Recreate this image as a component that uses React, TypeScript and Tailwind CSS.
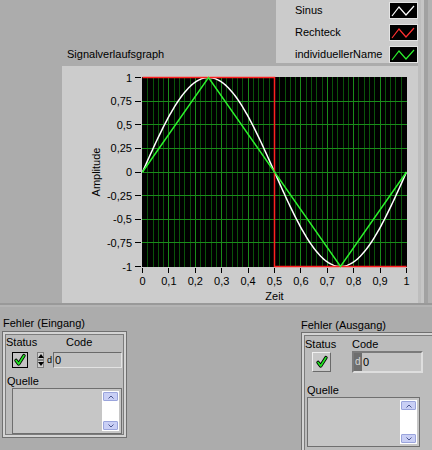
import React from "react";

const font = "font-['Liberation_Sans',Arial,sans-serif]";

// plot area inside the graph panel (panel coords)
const X = (t: number) => 80.5 + 264 * t;
const Y = (v: number) => 11.5 + 94.5 * (1 - v);

const yLabels: [number, string][] = [
  [1, "1"],
  [0.75, "0,75"],
  [0.5, "0,5"],
  [0.25, "0,25"],
  [0, "0"],
  [-0.25, "-0,25"],
  [-0.5, "-0,5"],
  [-0.75, "-0,75"],
  [-1, "-1"],
];

function Graph() {
  const minor: number[] = [];
  const major: number[] = [];
  for (let i = 1; i < 50; i++) {
    const x = Math.round(X(i / 50) - 0.5) + 0.5;
    (i % 5 === 0 ? major : minor).push(x);
  }
  const hLines = [0.75, 0.5, 0.25, 0, -0.25, -0.5, -0.75].map((v) => Math.round(Y(v) - 0.5) + 0.5);
  const sine = Array.from({ length: 241 }, (_, i) => {
    const t = i / 240;
    return `${i ? "L" : "M"}${X(t).toFixed(2)} ${Y(Math.sin(2 * Math.PI * t)).toFixed(2)}`;
  }).join(" ");
  const tri = `M${X(0)} ${Y(0)} L${X(0.25)} ${Y(1)} L${X(0.75)} ${Y(-1)} L${X(1)} ${Y(0)}`;
  const rect = `M${X(0)} ${Y(1)} L${X(0.5)} ${Y(1)} L${X(0.5)} ${Y(-1)} L${X(1)} ${Y(-1)}`;

  return (
    <svg width="356" height="237" className="block" fontFamily="Liberation Sans, Arial, sans-serif" fontSize="11">
      <rect x="80" y="11" width="265" height="190" fill="#000" />
      {minor.map((x) => (
        <line key={"m" + x} x1={x} x2={x} y1="11" y2="201" stroke="#0a520a" strokeWidth="1" />
      ))}
      {hLines.map((y) => (
        <line key={"h" + y} x1="80" x2="345" y1={y} y2={y} stroke="#1a8c1a" strokeWidth="1" />
      ))}
      {major.map((x) => (
        <line key={"M" + x} x1={x} x2={x} y1="11" y2="201" stroke="#1a8c1a" strokeWidth="1" />
      ))}
      <path d={sine} fill="none" stroke="#ffffff" strokeWidth="1.5" />
      <path d={rect} fill="none" stroke="#ff2020" strokeWidth="1.5" />
      <path d={tri} fill="none" stroke="#2cf02c" strokeWidth="1.5" />

      {yLabels.map(([v, s]) => (
        <g key={s}>
          <line x1="73" x2="79" y1={Math.round(Y(v) - 0.5) + 0.5} y2={Math.round(Y(v) - 0.5) + 0.5} stroke="#000" />
          <text x="70" y={Y(v) + 4} textAnchor="end" fill="#000">
            {s}
          </text>
        </g>
      ))}
      {Array.from({ length: 11 }, (_, i) => {
        const x = Math.round(X(i / 10) - 0.5) + 0.5;
        return (
          <g key={i}>
            <line x1={x} x2={x} y1="202" y2="207" stroke="#000" />
            <text x={X(i / 10)} y="219" textAnchor="middle" fill="#000">
              {i === 0 ? "0" : i === 10 ? "1" : `0,${i}`}
            </text>
          </g>
        );
      })}
      <text x={X(0.5)} y="234" textAnchor="middle" fill="#000">
        Zeit
      </text>
      <text x="0" y="0" textAnchor="middle" fill="#000" transform="translate(38 106) rotate(-90)">
        Amplitude
      </text>
    </svg>
  );
}

function LegendIcon({ color }: { color: string }) {
  return (
    <div className="w-[29px] h-[17px] border border-[#e4e4e4] bg-black">
      <svg width="27" height="15" className="block">
        <path d="M2 13 L9 4 L16 12 L24 3" fill="none" stroke={color} strokeWidth="1.2" />
      </svg>
    </div>
  );
}

function Legend() {
  const rows: [string, string][] = [
    ["Sinus", "#ffffff"],
    ["Rechteck", "#ff3030"],
    ["individuellerName", "#2cf02c"],
  ];
  return (
    <div className="w-[142px] h-[63px] bg-[#cbcbcb] flex flex-col pt-[2px] gap-[5px]">
      {rows.map(([name, color]) => (
        <div key={name} className="flex items-center justify-between h-[17px] pl-[19px]">
          <span className="text-[11px] leading-[13px] text-black">{name}</span>
          <LegendIcon color={color} />
        </div>
      ))}
    </div>
  );
}

function Check({ size = 16 }: { size?: number }) {
  return (
    <svg width={size} height={size} viewBox="0 0 16 16" className="block">
      <path d="M3.5 8.5 L6.5 12.5 L12.5 3" fill="none" stroke="#000" strokeWidth="4" strokeLinecap="round" strokeLinejoin="round" />
      <path d="M3.5 8.5 L6.5 12.5 L12.5 3" fill="none" stroke="#22e622" strokeWidth="2" strokeLinecap="round" strokeLinejoin="round" />
    </svg>
  );
}

function ScrollBtn({ up }: { up?: boolean }) {
  return (
    <div className="h-[9px] mx-[1px] bg-[#c9cff5] border border-[#9aa4dc] rounded-[1px] flex items-center justify-center">
      <svg width="6" height="4" className="block">
        <path d={up ? "M0.5 3.5 L3 1 L5.5 3.5" : "M0.5 0.5 L3 3 L5.5 0.5"} fill="none" stroke="#4a5590" strokeWidth="1" />
      </svg>
    </div>
  );
}

function TextBox({ w, h }: { w: number; h: number }) {
  return (
    <div
      className="border border-[#6f6f6f] bg-[#c6c6c6] flex justify-end pr-[2px] py-[2px]"
      style={{ width: w, height: h }}
    >
      <div className="w-[17px] h-full bg-white flex flex-col justify-between py-[1px]">
        <ScrollBtn up />
        <ScrollBtn />
      </div>
    </div>
  );
}

function Frame({ children, className }: { children: React.ReactNode; className: string }) {
  return (
    <div className={`border border-[#707070] ${className}`}>
      <div className="h-full border-2 border-[#d4d4d4]">
        <div className="h-full border border-[#7c7c7c] bg-[#bcbcbc]">{children}</div>
      </div>
    </div>
  );
}

function FehlerEingang() {
  return (
    <div className="pl-[2px] pt-[10px]">
      <div className="text-[11px] leading-[13px] pl-[1px]">Fehler (Eingang)</div>
      <Frame className="w-[125px] h-[107px] mt-[1px]">
        <div className="flex flex-col pt-[1px]">
          <div className="flex h-[13px] text-[11px] leading-[13px]">
            <span className="w-[60px]">Status</span>
            <span>Code</span>
          </div>
          <div className="flex items-center mt-[3px] h-[16px]">
            <div className="ml-[6px] w-[16px] h-[16px] border border-black bg-[#c4c4c4]">
              <Check size={14} />
            </div>
            <div className="ml-[9px] w-[7px] h-[16px] flex flex-col">
              <div className="h-[8px] bg-[#d0d0d0] border border-[#808080] flex items-center justify-center">
                <div className="w-0 h-0 border-l-[3px] border-r-[3px] border-b-[4px] border-l-transparent border-r-transparent border-b-black" />
              </div>
              <div className="h-[8px] bg-[#d0d0d0] border border-[#808080] flex items-center justify-center">
                <div className="w-0 h-0 border-l-[3px] border-r-[3px] border-t-[4px] border-l-transparent border-r-transparent border-t-black" />
              </div>
            </div>
            <span className="ml-[3px] text-[9px] leading-[10px] w-[6px]">d</span>
            <div className="w-[69px] h-[16px] border border-t-[#6a6a6a] border-l-[#6a6a6a] border-b-[#e2e2e2] border-r-[#e2e2e2] bg-[#c2c2c2] text-[11px] leading-[14px] pl-[1px]">
              0
            </div>
          </div>
          <div className="mt-[7px] h-[13px] text-[11px] leading-[13px] pl-[1px]">Quelle</div>
          <div className="ml-[6px]">
            <TextBox w={110} h={46} />
          </div>
        </div>
      </Frame>
    </div>
  );
}

function FehlerAusgang() {
  return (
    <div className="w-[131px] pt-[12px]">
      <div className="text-[11px] leading-[13px]">Fehler (Ausgang)</div>
      <Frame className="w-[140px] h-[130px] mt-[0px]">
        <div className="flex flex-col pt-[2px]">
          <div className="flex">
            <div className="w-[47px] flex flex-col">
              <span className="text-[11px] leading-[13px]">Status</span>
              <div className="ml-[7px] mt-[1px] w-[19px] h-[20px] bg-[#c8c8c8] border border-t-[#f0f0f0] border-l-[#f0f0f0] border-b-[#6a6a6a] border-r-[#6a6a6a] flex items-center justify-center">
                <Check size={14} />
              </div>
            </div>
            <div className="flex flex-col">
              <span className="text-[11px] leading-[13px]">Code</span>
              <div className="w-[71px] h-[22px] border-2 border-t-[#7a7a7a] border-l-[#7a7a7a] border-b-[#dedede] border-r-[#dedede] bg-[#c4c4c4] flex">
                <div className="w-[8px] bg-[#6e6e6e] text-[#d6d6d6] text-[10px] leading-[18px] pl-[1px]">d</div>
                <span className="text-[11px] leading-[18px] pl-[1px]">0</span>
              </div>
            </div>
          </div>
          <div className="mt-[11px] h-[13px] text-[11px] leading-[13px] pl-[2px]">Quelle</div>
          <div className="ml-[2px]">
            <TextBox w={113} h={50} />
          </div>
        </div>
      </Frame>
    </div>
  );
}

export default function App() {
  return (
    <div className={`w-[432px] h-[450px] overflow-hidden bg-[#acacac] text-black ${font}`}>
      {/* top pane: legend + graph */}
      <div className="flex h-[303px]">
        <div className="w-[418px] flex flex-col pl-[62px]">
          <div className="h-[63px] flex items-end justify-between">
            <span className="pl-[5px] pb-[2px] text-[11px] leading-[13px]">Signalverlaufsgraph</span>
            <Legend />
          </div>
          <div className="h-[3px]" />
          <div className="w-[356px] h-[237px] bg-[#cccccc]">
            <Graph />
          </div>
        </div>
        <div className="flex w-[14px]">
          <div className="w-[3px] bg-[#bdbdbd]" />
          <div className="w-[3px] bg-[#c6c6c6]" />
          <div className="w-[4px] bg-[#a2a2a2]" />
          <div className="w-[4px] bg-[#b2b2b2]" />
        </div>
      </div>
      {/* splitter */}
      <div className="h-[4px] border-t-2 border-[#999999] bg-[#b4b4b4]" />
      {/* bottom pane: error clusters */}
      <div className="flex justify-between h-[143px]">
        <FehlerEingang />
        <FehlerAusgang />
      </div>
    </div>
  );
}
